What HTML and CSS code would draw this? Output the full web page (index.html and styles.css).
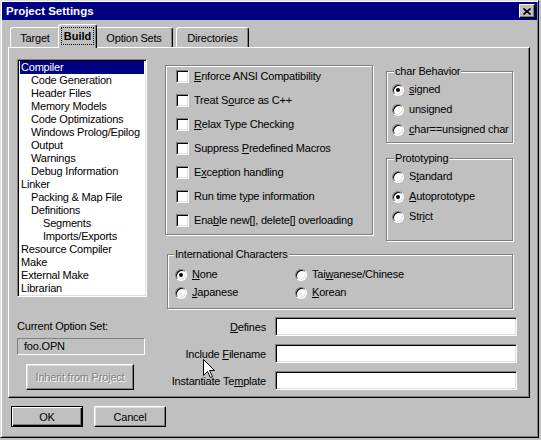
FILE: index.html
```html
<!DOCTYPE html>
<html lang="en">
<head>
    <meta charset="UTF-8">
    <title>Project Settings</title>
    <link rel="stylesheet" href="styles.css">
</head>
<body>
    <div class="window">
        <div class="titlebar">
            <span class="title">Project Settings</span>
            <span class="close">
                <svg width="8" height="7" viewBox="0 0 8 7"><path d="M0.5 0.5 L7.5 6.5 M7.5 0.5 L0.5 6.5" stroke="#000" stroke-width="1.6" fill="none"/></svg>
            </span>
        </div>

        <div class="sheet">
            <div class="tabs">
                <div class="tab t-target">Target</div>
                <div class="tab active"><span class="focus">Build</span></div>
                <div class="tab t-options">Option Sets</div>
                <div class="tab t-dirs">Directories</div>
            </div>

            <div class="page">
                <!-- left: option tree -->
                <div class="left">
                    <div class="listbox">
                        <div class="item sel">Compiler</div>
                        <div class="item l1">Code Generation</div>
                        <div class="item l1">Header Files</div>
                        <div class="item l1">Memory Models</div>
                        <div class="item l1">Code Optimizations</div>
                        <div class="item l1">Windows Prolog/Epilog</div>
                        <div class="item l1">Output</div>
                        <div class="item l1">Warnings</div>
                        <div class="item l1">Debug Information</div>
                        <div class="item">Linker</div>
                        <div class="item l1">Packing &amp; Map File</div>
                        <div class="item l1">Definitions</div>
                        <div class="item l2">Segments</div>
                        <div class="item l2">Imports/Exports</div>
                        <div class="item">Resource Compiler</div>
                        <div class="item">Make</div>
                        <div class="item">External Make</div>
                        <div class="item">Librarian</div>
                    </div>
                    <div class="caption">Current Option Set:</div>
                    <div class="static">foo.OPN</div>
                    <button class="btn inherit" disabled>Inherit from Project</button>
                </div>

                <!-- right: compiler options -->
                <div class="right">
                    <div class="top-row">
                        <fieldset class="group checks">
                            <label class="check"><span class="box"></span><span><u>E</u>nforce ANSI Compatibility</span></label>
                            <label class="check"><span class="box"></span><span>Treat S<u>o</u>urce as C++</span></label>
                            <label class="check"><span class="box"></span><span><u>R</u>elax Type Checking</span></label>
                            <label class="check"><span class="box"></span><span>Suppress <u>P</u>redefined Macros</span></label>
                            <label class="check"><span class="box"></span><span>E<u>x</u>ception handling</span></label>
                            <label class="check"><span class="box"></span><span>Run time t<u>y</u>pe information</span></label>
                            <label class="check"><span class="box"></span><span>Ena<u>b</u>le new[], delete[] overloading</span></label>
                        </fieldset>

                        <div class="stack">
                            <fieldset class="group radios char">
                                <legend>char Behavior</legend>
                                <label class="radio"><span class="dot on"></span><span><u>s</u>igned</span></label>
                                <label class="radio"><span class="dot"></span><span>unsigned</span></label>
                                <label class="radio"><span class="dot"></span><span><u>c</u>har==unsigned char</span></label>
                            </fieldset>
                            <fieldset class="group radios proto">
                                <legend>Prototyping</legend>
                                <label class="radio"><span class="dot"></span><span>S<u>t</u>andard</span></label>
                                <label class="radio"><span class="dot on"></span><span><u>A</u>utoprototype</span></label>
                                <label class="radio"><span class="dot"></span><span>Str<u>i</u>ct</span></label>
                            </fieldset>
                        </div>
                    </div>

                    <fieldset class="group intl">
                        <legend>International Characters</legend>
                        <div class="intl-grid">
                            <label class="radio"><span class="dot on"></span><span><u>N</u>one</span></label>
                            <label class="radio"><span class="dot"></span><span>Tai<u>w</u>anese/Chinese</span></label>
                            <label class="radio"><span class="dot"></span><span><u>J</u>apanese</span></label>
                            <label class="radio"><span class="dot"></span><span><u>K</u>orean</span></label>
                        </div>
                    </fieldset>

                    <div class="fields">
                        <label><u>D</u>efines</label>
                        <div class="edit"></div>
                        <label>Include <u>F</u>ilename</label>
                        <div class="edit"></div>
                        <label>Instantiate Te<u>m</u>plate</label>
                        <div class="edit"></div>
                    </div>
                </div>
            </div>
        </div>

        <div class="buttons">
            <button class="btn default">OK</button>
            <button class="btn">Cancel</button>
        </div>

        <!-- mouse pointer over the form -->
        <svg class="cursor" width="13" height="20" viewBox="0 0 13 20">
            <path d="M0.5 0.5 V16.5 L4.5 12.5 L7.5 18.5 L9.5 17.5 L6.5 11.5 H11.5 Z" fill="#fff" stroke="#000" stroke-width="1"/>
        </svg>
    </div>
</body>
</html>
```

FILE: styles.css
```css
:root {
    --face: #c0c0c0;
    --shadow: #808080;
    --light: #dfdfdf;
    --navy: #000080;
}

body {
    margin: 0;
    background: var(--face);
    font-family: "Liberation Sans", Arial, sans-serif;
    font-size: 11px;
    letter-spacing: -0.2px;
    color: #000;
}

u { text-decoration: underline; text-underline-offset: 1px; }

.window {
    position: relative;
    width: 539px;
    height: 438px;
    box-sizing: border-box;
    padding: 1px;
    background: var(--face);
    border: 1px solid;
    border-color: var(--light) #000 #000 var(--light);
    box-shadow: inset 1px 1px 0 #fff, inset -1px -1px 0 var(--shadow);
}

/* title bar */
.titlebar {
    height: 18px;
    background: var(--navy);
    display: flex;
    align-items: center;
    justify-content: space-between;
    padding: 0 2px 0 4px;
}

.title {
    color: #fff;
    font-weight: bold;
    font-size: 11.5px;
    letter-spacing: 0;
}

.close {
    width: 16px;
    height: 14px;
    box-sizing: border-box;
    display: flex;
    align-items: center;
    justify-content: center;
    background: var(--face);
    border: 1px solid;
    border-color: #fff #000 #000 #fff;
    box-shadow: inset -1px -1px 0 var(--shadow);
}

/* tabs */
.sheet { margin: 4px 0 0 6px; }

.tabs {
    display: flex;
    align-items: flex-end;
    height: 23px;
    padding-left: 2px;
    position: relative;
    z-index: 1;
}

.tab {
    height: 20px;
    box-sizing: border-box;
    display: flex;
    align-items: center;
    justify-content: center;
    border: 1px solid;
    border-bottom: none;
    border-color: #fff #000 #000 #fff;
    border-radius: 3px 3px 0 0;
    box-shadow: inset -1px 0 0 var(--shadow);
    background: var(--face);
}

.t-target { width: 50px; }
.t-options { width: 78px; }
.t-dirs { width: 73px; margin-left: 3px; }

.tab.active {
    width: 39px;
    height: 24px;
    margin: 0 -2px -1px;
    padding-bottom: 2px;
    position: relative;
    z-index: 2;
    font-weight: bold;
    letter-spacing: 0;
}

.focus {
    padding: 1px 2px;
    outline: 1px dotted #000;
    line-height: 14px;
}

/* tab page */
.page {
    width: 522px;
    height: 351px;
    box-sizing: border-box;
    display: flex;
    padding: 11px 0 0 8px;
    border: 1px solid;
    border-color: #fff #000 #000 #fff;
    box-shadow: inset -1px -1px 0 var(--shadow);
}

.left {
    width: 130px;
    display: flex;
    flex-direction: column;
    align-items: flex-start;
}

.listbox {
    width: 130px;
    height: 238px;
    box-sizing: border-box;
    padding: 1px;
    background: #fff;
    border: 1px solid;
    border-color: var(--shadow) #fff #fff var(--shadow);
    box-shadow: inset 1px 1px 0 #000, inset -1px -1px 0 var(--light);
}

.item {
    height: 13px;
    line-height: 13px;
    padding-left: 2px;
    white-space: nowrap;
}

.item.l1 { padding-left: 12px; }
.item.l2 { padding-left: 24px; }

.item.sel {
    background: var(--navy);
    color: #fff;
    margin-left: 1px;
    margin-right: 1px;
    padding-left: 1px;
}

.caption {
    margin-top: 23px;
    line-height: 13px;
}

.static {
    margin-top: 5px;
    width: 128px;
    height: 17px;
    box-sizing: border-box;
    padding-left: 6px;
    line-height: 15px;
    border: 1px solid;
    border-color: var(--shadow) #fff #fff var(--shadow);
}

.btn {
    font: inherit;
    letter-spacing: inherit;
    color: #000;
    background: var(--face);
    padding: 0;
    border: 1px solid;
    border-color: #fff #000 #000 #fff;
    box-shadow: inset -1px -1px 0 var(--shadow), inset 1px 1px 0 var(--light);
}

.inherit {
    margin: 9px 0 0 9px;
    width: 108px;
    height: 26px;
    color: var(--shadow);
    text-shadow: 1px 1px 0 #fff;
}

/* group boxes */
.right {
    width: 352px;
    margin-left: 18px;
}

.top-row {
    display: flex;
    align-items: flex-start;
    margin-top: 6px;
}

.group {
    margin: 0;
    min-width: 0;
    box-sizing: border-box;
    border: 1px solid var(--shadow);
    box-shadow: inset 1px 1px 0 #fff, 1px 1px 0 #fff;
}

.group legend {
    padding: 0 1px;
    margin-left: 2px;
    line-height: 13px;
    background: var(--face);
}

.checks {
    width: 208px;
    height: 170px;
    padding: 4px 0 0 10px;
    display: flex;
    flex-direction: column;
    gap: 11px;
}

.check, .radio {
    display: flex;
    align-items: center;
    height: 13px;
    line-height: 13px;
    white-space: nowrap;
}

.box {
    width: 13px;
    height: 13px;
    box-sizing: border-box;
    margin-right: 5px;
    flex: none;
    background: #fff;
    border: 1px solid;
    border-color: var(--shadow) #fff #fff var(--shadow);
    box-shadow: inset 1px 1px 0 #000, inset -1px -1px 0 var(--light);
}

.stack {
    margin-left: 13px;
    width: 127px;
}

.radios {
    width: 127px;
    padding: 5px 0 0 5px;
    display: flex;
    flex-direction: column;
    gap: 7px;
}

.char { height: 78px; }
.proto { height: 89px; margin-top: 9px; }

.dot {
    position: relative;
    width: 12px;
    height: 12px;
    box-sizing: border-box;
    margin-right: 5px;
    flex: none;
    border-radius: 50%;
    background: #fff;
    border: 1px solid;
    border-color: var(--shadow) #fff #fff var(--shadow);
    box-shadow: inset 1px 1px 0 #000, inset -1px -1px 0 var(--light);
}

.dot.on::after {
    content: "";
    position: absolute;
    left: 3px;
    top: 3px;
    width: 4px;
    height: 4px;
    border-radius: 50%;
    background: #000;
}

.intl {
    width: 346px;
    height: 61px;
    margin: 7px 0 0 2px;
    padding: 7px 0 0 7px;
}

.intl legend { margin-left: -1px; }

.intl-grid {
    display: grid;
    grid-template-columns: 120px auto;
    row-gap: 5px;
}

/* edit fields */
.fields {
    margin-top: 8px;
    display: grid;
    grid-template-columns: 101px 242px;
    column-gap: 9px;
    row-gap: 8px;
    align-items: center;
}

.fields label {
    text-align: right;
    white-space: nowrap;
}

.edit {
    height: 19px;
    box-sizing: border-box;
    background: #fff;
    border: 1px solid;
    border-color: var(--shadow) #fff #fff var(--shadow);
    box-shadow: inset 1px 1px 0 #000, inset -1px -1px 0 var(--light);
}

/* dialog buttons */
.buttons {
    display: flex;
    gap: 11px;
    margin-top: 8px;
    padding-left: 9px;
}

.buttons .btn {
    width: 72px;
    height: 21px;
}

.btn.default {
    border-color: #000;
    box-shadow: inset 1px 1px 0 #fff, inset -1px -1px 0 #000, inset -2px -2px 0 var(--shadow);
}

.cursor {
    position: absolute;
    left: 202px;
    top: 358px;
}
```
